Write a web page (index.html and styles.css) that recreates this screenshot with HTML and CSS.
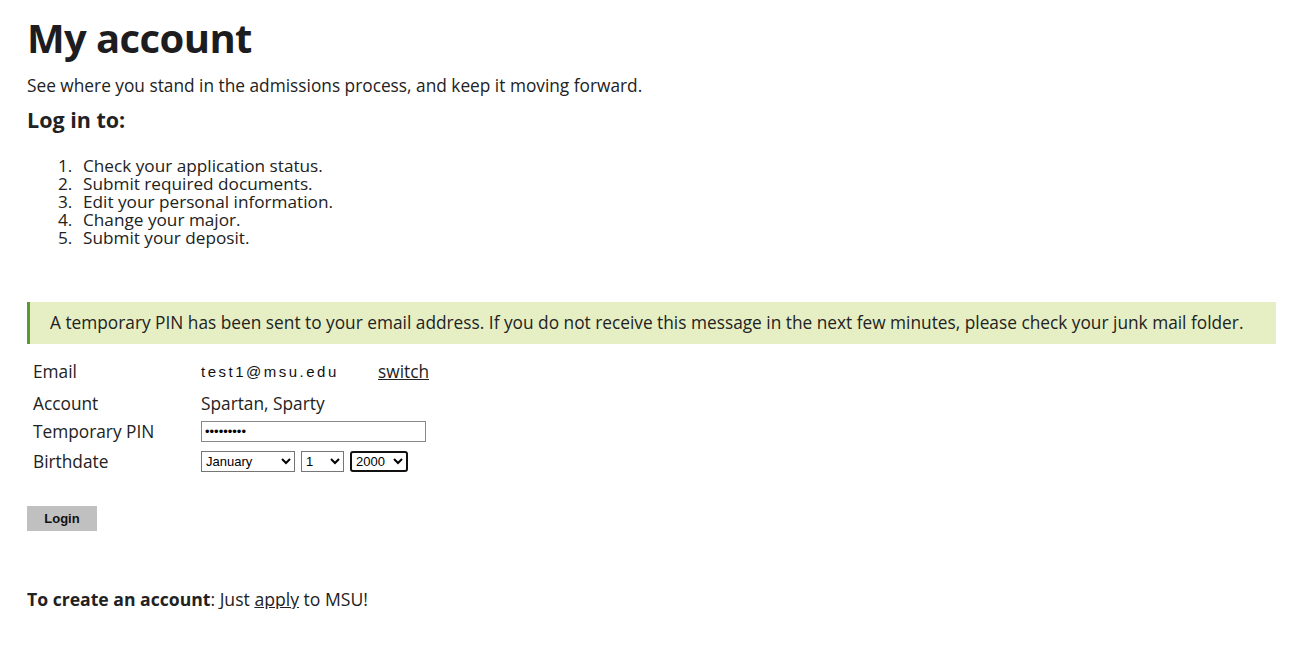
FILE: index.html
```html
<!DOCTYPE html>
<html lang="en">
<head>
<meta charset="utf-8">
<title>My account</title>
<link rel="stylesheet" href="styles.css">
</head>
<body>
<main class="page">
  <h1 class="title">My account</h1>
  <p class="lead">See where you stand in the admissions process, and keep it moving forward.</p>
  <h3 class="subhead">Log in to:</h3>
  <ol class="tasks">
    <li>Check your application status.</li>
    <li>Submit required documents.</li>
    <li>Edit your personal information.</li>
    <li>Change your major.</li>
    <li>Submit your deposit.</li>
  </ol>
  <div class="notice">A temporary PIN has been sent to your email address. If you do not receive this message in the next few minutes, please check your junk mail folder.</div>
  <form class="login">
    <div class="row row-email">
      <span class="label">Email</span>
      <span class="value email">test1@msu.edu</span>
      <a class="switch" href="#">switch</a>
    </div>
    <div class="row row-account">
      <span class="label">Account</span>
      <span class="value">Spartan, Sparty</span>
    </div>
    <div class="row row-pin">
      <span class="label">Temporary PIN</span>
      <input class="pin" type="password" value="123456789">
    </div>
    <div class="row row-birth">
      <span class="label">Birthdate</span>
      <span class="selects">
        <select class="sel sel-month"><option>January</option></select>
        <select class="sel sel-day"><option>1</option></select>
        <select class="sel sel-year"><option>2000</option></select>
      </span>
    </div>
    <button class="btn" type="button">Login</button>
  </form>
  <p class="create"><strong>To create an account</strong>: Just <a href="#">apply</a> to MSU!</p>
</main>
</body>
</html>
```

FILE: styles.css
```css
html, body {
  margin: 0;
  padding: 0;
  background: #ffffff;
}
body {
  font-family: "Open Sans", "Lato", sans-serif;
  color: #222222;
}
.page {
  padding: 14px 27px 0 27px;
}
.title {
  margin: 0;
  font-size: 40px;
  line-height: 48px;
  font-weight: 700;
  color: #1d1d1f;
  letter-spacing: -0.6px;
}
.lead {
  margin: 14px 0 0 0;
  font-size: 17.3px;
  line-height: 20px;
}
.subhead {
  margin: 12px 0 0 0;
  font-size: 21.5px;
  line-height: 24px;
  font-weight: 700;
}
.tasks {
  list-style: none;
  margin: 25px 0 0 0;
  padding-left: 31px;
  font-size: 17.2px;
  line-height: 18px;
  counter-reset: task;
}
.tasks li {
  display: flex;
  counter-increment: task;
}
.tasks li::before {
  content: counter(task) ".";
  width: 14px;
  text-align: right;
  margin-right: 11px;
}
.notice {
  margin-top: 55px;
  background: #e6efc4;
  border-left: 3px solid #5c9a2c;
  padding: 10px 20px 11px 20px;
  font-size: 17.3px;
  line-height: 21px;
  color: #222;
}
.login {
  margin-top: 15px;
  display: flex;
  flex-direction: column;
}
.row {
  display: flex;
  align-items: center;
  font-size: 17.3px;
}
.label {
  width: 168px;
  padding-left: 6px;
}
.row-email { height: 24px; }
.row-account { height: 28px; margin-top: 6px; }
.row-pin { height: 28px; }
.row-birth { height: 32px; }
.email {
  font-family: "Liberation Sans", Arial, sans-serif;
  font-size: 15px;
  letter-spacing: 2.5px;
  width: 177px;
  color: #111;
}
.switch {
  color: #222;
  text-decoration: underline;
  font-weight: 400;
}
.pin {
  box-sizing: border-box;
  width: 225px;
  height: 21px;
  margin: 0;
  border: 1px solid #888;
  padding: 1px 3px;
  font-size: 13px;
  font-family: "Liberation Sans", Arial, sans-serif;
}
.selects {
  display: flex;
  gap: 6px;
}
.sel {
  box-sizing: border-box;
  height: 21px;
  margin: 0;
  font-family: "Liberation Sans", Arial, sans-serif;
  font-size: 13px;
  border: 1px solid #767676;
  background: #fff;
  color: #000;
}
.sel-month { width: 94px; }
.sel-day { width: 43px; }
.sel-year { width: 58px; border: 2px solid #111; border-radius: 3px; }
.btn {
  align-self: flex-start;
  margin-top: 29px;
  width: 70px;
  height: 25px;
  background: #c0c0c0;
  border: none;
  font-family: "Liberation Sans", Arial, sans-serif;
  font-weight: 700;
  font-size: 13px;
  color: #111;
  padding: 0;
}
.create {
  margin: 58px 0 0 0;
  font-size: 17.6px;
  line-height: 20px;
}
.create a {
  color: #222;
  text-decoration: underline;
}
.create strong { font-weight: 700; }
```
